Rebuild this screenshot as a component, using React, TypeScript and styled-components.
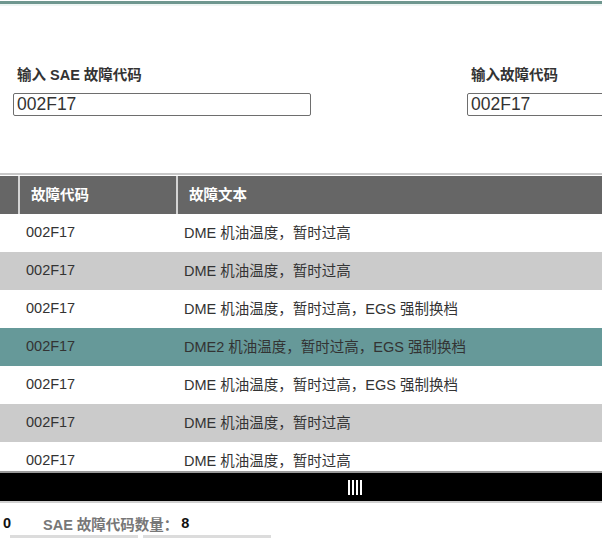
import React from "react";
import styled, { createGlobalStyle } from "styled-components";

const Global = createGlobalStyle`
  html, body { margin: 0; padding: 0; background: #ffffff; }
  body {
    font-family: "Liberation Sans", Arial, "Noto Sans CJK SC", sans-serif;
    color: #333333;
    overflow: hidden;
  }
`;

const Page = styled.div`
  width: 602px;
  height: 538px;
  overflow: hidden;
  display: flex;
  flex-direction: column;
`;

const TopRule = styled.div`
  margin-top: 1px;
  height: 3px;
  background: #6f978f;
  border-bottom: 2px solid #eef5f3;
  flex: none;
`;

const Form = styled.div`
  display: flex;
  gap: 156px;
  padding: 61px 0 0 13px;
  height: 107px;
  box-sizing: border-box;
  flex: none;
  white-space: nowrap;
`;

const Field = styled.div`
  display: flex;
  flex-direction: column;
  gap: 9px;
`;

const Label = styled.div`
  font-size: 14.5px;
  font-weight: bold;
  color: #333;
  padding-left: 4px;
  line-height: 17px;
`;

const Input = styled.input<{ $w: number }>`
  width: ${(p) => p.$w}px;
  height: 25px;
  box-sizing: border-box;
  border: 1px solid #6e6e6e;
  border-radius: 2px;
  padding: 0 3px;
  font-family: "Liberation Sans", Arial, sans-serif;
  font-size: 17.5px;
  color: #333;
  background: #fff;
  outline: none;
`;

const Scroller = styled.div`
  height: 298px;
  overflow: hidden;
  flex: none;
  margin-top: 60px;
`;

const Table = styled.div`
  border-top: 2px solid #c8c8c8;
  padding-top: 1px;
  width: 602px;
`;

const HeadRow = styled.div`
  display: grid;
  grid-template-columns: 18px 158px 1fr;
  height: 38px;
  background: #666666;
`;

const HeadCell = styled.div<{ $first?: boolean }>`
  display: flex;
  align-items: center;
  padding: 0 0 3px 11px;
  color: #ffffff;
  font-weight: bold;
  font-size: 14.5px;
  border-left: ${(p) => (p.$first ? "none" : "2px solid #d4d4d4")};
`;

const Row = styled.div<{ $bg: string }>`
  display: grid;
  grid-template-columns: 18px 158px 1fr;
  height: 38px;
  background: ${(p) => p.$bg};
`;

const Cell = styled.div`
  display: flex;
  align-items: center;
  padding: 0 0 3px 8px;
  font-size: 14.5px;
  color: #333333;
  white-space: nowrap;
`;

const Track = styled.div`
  height: 28px;
  background: #000;
  border-top: 2px solid #9a9a9a;
  border-bottom: 2px solid #d0d0d0;
  overflow: hidden;
  flex: none;
`;

const Thumb = styled.div`
  width: 710px;
  height: 100%;
  display: flex;
  align-items: center;
  justify-content: center;
  gap: 2px;
`;

const GripBar = styled.span`
  width: 2px;
  height: 15px;
  background: #ffffff;
`;

const Footer = styled.div`
  display: flex;
  align-items: center;
  height: 32px;
  box-sizing: border-box;
  padding: 8px 0 0 3px;
  font-size: 14.5px;
  font-weight: bold;
  flex: none;
  white-space: nowrap;
`;

const Zero = styled.span`
  color: #111;
  width: 40px;
`;

const CountLabel = styled.span`
  color: #777777;
`;

const CountValue = styled.span`
  color: #111;
  margin-left: 3px;
`;

const Tabs = styled.div`
  display: flex;
  gap: 5px;
  padding-left: 10px;
`;

const Tab = styled.div`
  width: 128px;
  height: 10px;
  background: #dcdcdc;
`;

const rows = [
  { bg: "#ffffff", text: "DME 机油温度，暂时过高" },
  { bg: "#cbcbcb", text: "DME 机油温度，暂时过高" },
  { bg: "#ffffff", text: "DME 机油温度，暂时过高，EGS 强制换档" },
  { bg: "#669999", text: "DME2 机油温度，暂时过高，EGS 强制换档" },
  { bg: "#ffffff", text: "DME 机油温度，暂时过高，EGS 强制换档" },
  { bg: "#cbcbcb", text: "DME 机油温度，暂时过高" },
  { bg: "#ffffff", text: "DME 机油温度，暂时过高" },
];

export default function App() {
  return (
    <Page>
      <Global />
      <TopRule />
      <Form>
        <Field>
          <Label>输入 SAE 故障代码</Label>
          <Input $w={298} defaultValue="002F17" />
        </Field>
        <Field>
          <Label>输入故障代码</Label>
          <Input $w={298} defaultValue="002F17" />
        </Field>
      </Form>
      <Scroller>
        <Table>
          <HeadRow>
            <HeadCell $first />
            <HeadCell>故障代码</HeadCell>
            <HeadCell>故障文本</HeadCell>
          </HeadRow>
          {rows.map((r, i) => (
            <Row key={i} $bg={r.bg}>
              <Cell />
              <Cell>002F17</Cell>
              <Cell>{r.text}</Cell>
            </Row>
          ))}
        </Table>
      </Scroller>
      <Track>
        <Thumb>
          <GripBar />
          <GripBar />
          <GripBar />
          <GripBar />
        </Thumb>
      </Track>
      <Footer>
        <Zero>0</Zero>
        <CountLabel>SAE 故障代码数量：</CountLabel>
        <CountValue>8</CountValue>
      </Footer>
      <Tabs>
        <Tab />
        <Tab />
      </Tabs>
    </Page>
  );
}
